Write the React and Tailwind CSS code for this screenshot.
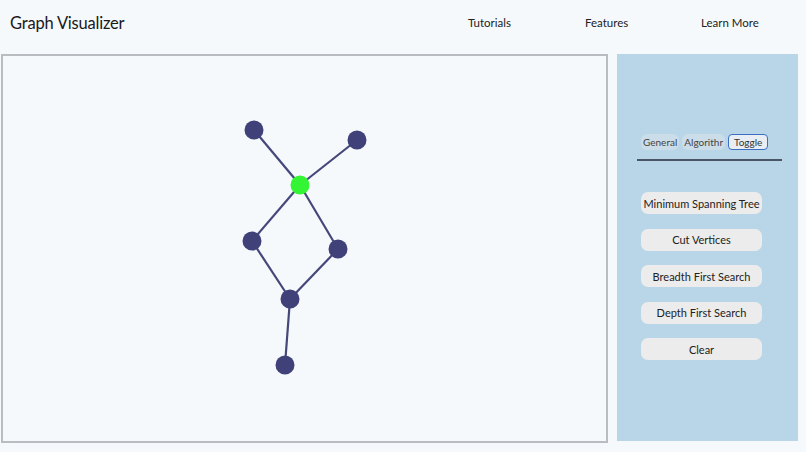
import { useState } from 'react'

// Nodos y aristas del grafo (coordenadas relativas al lienzo)
const NODES = [
  { id: 'a', x: 251, y: 74 },
  { id: 'b', x: 354, y: 84 },
  { id: 'c', x: 297, y: 129, active: true },
  { id: 'd', x: 249, y: 185 },
  { id: 'e', x: 335, y: 193 },
  { id: 'f', x: 287, y: 243 },
  { id: 'g', x: 282, y: 309 },
]

const EDGES = [
  ['a', 'c'],
  ['b', 'c'],
  ['c', 'd'],
  ['c', 'e'],
  ['d', 'f'],
  ['e', 'f'],
  ['f', 'g'],
]

const ACTIONS = [
  'Minimum Spanning Tree',
  'Cut Vertices',
  'Breadth First Search',
  'Depth First Search',
  'Clear',
]

const TABS = ['General', 'Algorithr', 'Toggle']

const byId = Object.fromEntries(NODES.map(n => [n.id, n]))

const GraphCanvas = () => (
  <div className="w-[607px] h-[389px] border-2 border-[#b9bcc0] bg-[#f6f9fc]">
    <svg width="603" height="385" viewBox="0 0 603 385">
      {EDGES.map(([s, t]) => (
        <line
          key={s + t}
          x1={byId[s].x}
          y1={byId[s].y}
          x2={byId[t].x}
          y2={byId[t].y}
          stroke="#45477a"
          strokeWidth="2.2"
        />
      ))}
      {NODES.map(n => (
        <circle key={n.id} cx={n.x} cy={n.y} r="9.5" fill={n.active ? '#33f533' : '#3f4178'} />
      ))}
    </svg>
  </div>
)

const SidePanel = () => {
  const [tab, setTab] = useState('Toggle')

  return (
    <div className="w-[181px] h-[387px] bg-[#b9d6e8] flex flex-col items-start pt-[80px] pl-[20px]">
      <div className="w-[145px] border-b-2 border-[#4b5563] pb-[9px] flex items-center gap-[3px] pl-[4px]">
        {TABS.map(t => (
          <button
            key={t}
            onClick={() => setTab(t)}
            className={
              t === tab
                ? 'h-[16px] px-[5px] rounded-[4px] border-[1.5px] border-[#3b6fc4] bg-[#e8eef3] text-[10px] text-[#333] leading-none whitespace-nowrap'
                : 'h-[16px] px-[2px] rounded-[6px] bg-[#cbdde9] text-[10px] text-[#444] leading-none whitespace-nowrap'
            }
          >
            {t}
          </button>
        ))}
      </div>
      <div className="flex flex-col gap-[14.5px] mt-[31px] pl-[4px]">
        {ACTIONS.map(a => (
          <button
            key={a}
            className="w-[121px] h-[22px] rounded-[7px] bg-[#ececec] text-[11px] text-[#222] leading-none"
          >
            {a}
          </button>
        ))}
      </div>
    </div>
  )
}

export default function App() {
  return (
    <div
      className="w-[806px] h-[452px] bg-[#f5f9fc] overflow-hidden"
      style={{ fontFamily: 'Lato, "Open Sans", sans-serif' }}
    >
      <header className="h-[54px] flex items-center justify-between pl-[10px] pb-[8px]">
        <h1 className="text-[16.5px] text-[#1a1a1a] tracking-[-0.2px]">Graph Visualizer</h1>
        <nav className="flex items-center text-[11.5px] text-[#222]">
          <a className="w-[117px]">Tutorials</a>
          <a className="w-[116px]">Features</a>
          <a className="w-[105px]">Learn More</a>
        </nav>
      </header>
      <main className="flex items-start pl-[1px] gap-[9px]">
        <GraphCanvas />
        <SidePanel />
      </main>
    </div>
  )
}
